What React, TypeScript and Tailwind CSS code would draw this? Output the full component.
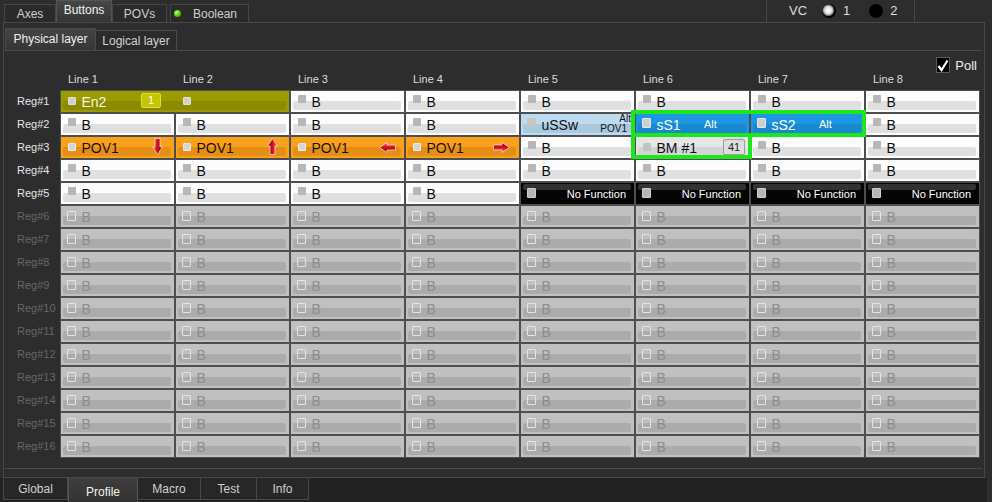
import React from "react";

type Variant = "normal" | "disabled" | "olive" | "orange" | "light" | "blue" | "gray" | "black";

const styles: Record<Variant, { bg: string; band: string; text: string; box: string }> = {
  normal: {
    bg: "bg-[#fcfcfc]",
    band: "bottom-[2px] h-[9px] bg-[#e0e0e0]",
    text: "text-[#0c0c0c]",
    box: "ml-[7px] mt-[4px] w-[8px] h-[8px] bg-[#b7b7b7]",
  },
  disabled: {
    bg: "bg-[#c0c0c0]",
    band: "bottom-[2px] h-[9px] bg-[#ababab]",
    text: "text-[#8d8d8d]",
    box: "ml-[6px] mt-[5px] w-[9px] h-[10px] border border-[#e4e4e4]",
  },
  olive: {
    bg: "bg-[#9b9b00]",
    band: "bottom-[2px] h-[9px] bg-[#8b8b00]",
    text: "text-[#f6f6e8]",
    box: "ml-[7px] mt-[6px] w-[8px] h-[8px] bg-[#d2d2c4] border border-[#e0e0d6]",
  },
  orange: {
    bg: "bg-[#f9a11a]",
    band: "bottom-[2px] h-[9px] bg-[#e48e18]",
    text: "text-[#1c1200]",
    box: "ml-[7px] mt-[6px] w-[8px] h-[8px] bg-[#d6d6d6] border border-[#ececec]",
  },
  light: {
    bg: "bg-[#bedcf0]",
    band: "bottom-[2px] h-[9px] bg-[#a8c9de]",
    text: "text-[#111]",
    box: "ml-[6px] mt-[4px] w-[9px] h-[9px] bg-[#c6c6c6]",
  },
  blue: {
    bg: "bg-[#1d97e2]",
    band: "bottom-[2px] h-[9px] bg-[#1988d0]",
    text: "text-white",
    box: "ml-[6px] mt-[4px] w-[9px] h-[10px] bg-[#cfcfcf] border border-[#e6e6e6]",
  },
  gray: {
    bg: "bg-[#e6e6e6]",
    band: "bottom-[2px] h-[9px] bg-[#d4d4d4]",
    text: "text-[#111]",
    box: "ml-[7px] mt-[6px] w-[8px] h-[8px] bg-[#c2c2c2]",
  },
  black: {
    bg: "bg-[#050505]",
    band: "top-[1px] h-[6px] bg-[#323232]",
    text: "text-white",
    box: "ml-[6px] mt-[5px] w-[9px] h-[10px] bg-[#b6b6b6] border border-[#cfcfcf]",
  },
};

function ArrowV({ up }: { up?: boolean }) {
  return (
    <svg width="11" height="17" viewBox="0 0 11 17" className={up ? "rotate-180" : ""}>
      <defs>
        <linearGradient id={up ? "gu" : "gd"} x1="0" y1="0" x2="1" y2="0">
          <stop offset="0" stopColor="#ff7a7a" />
          <stop offset="0.45" stopColor="#d8141e" />
          <stop offset="1" stopColor="#8a0010" />
        </linearGradient>
      </defs>
      <polygon
        points="3,0.5 8,0.5 8,9 10.5,9 5.5,16.5 0.5,9 3,9"
        fill={`url(#${up ? "gu" : "gd"})`}
        stroke="#f6d2d2"
        strokeWidth="0.8"
      />
    </svg>
  );
}

function ArrowH({ right }: { right?: boolean }) {
  return (
    <svg width="17" height="11" viewBox="0 0 17 11" className={right ? "rotate-180" : ""}>
      <defs>
        <linearGradient id={right ? "gr" : "gl"} x1="0" y1="0" x2="0" y2="1">
          <stop offset="0" stopColor="#ff7a7a" />
          <stop offset="0.45" stopColor="#d8141e" />
          <stop offset="1" stopColor="#8a0010" />
        </linearGradient>
      </defs>
      <polygon
        points="16.5,3 8,3 8,0.5 0.5,5.5 8,10.5 8,8 16.5,8"
        fill={`url(#${right ? "gr" : "gl"})`}
        stroke="#f6d2d2"
        strokeWidth="0.8"
      />
    </svg>
  );
}

function Cell({
  v,
  label = "B",
  span,
  children,
}: {
  v: Variant;
  label?: string;
  span?: boolean;
  children?: React.ReactNode;
}) {
  const s = styles[v];
  return (
    <div className={`relative h-[21px] overflow-hidden ${s.bg} ${span ? "col-span-2" : ""}`}>
      <span className={`absolute left-[2px] right-[3px] rounded-[2px] ${s.band}`} />
      <div className="relative flex h-full items-center">
        <span className={`shrink-0 self-start rounded-[1px] ${s.box}`} />
        {label && <span className={`ml-[5.5px] text-[14px] leading-none ${s.text}`}>{label}</span>}
        {children}
      </div>
    </div>
  );
}

const B = () => <Cell v="normal" />;
const D = () => <Cell v="disabled" />;

function NoFunction() {
  return (
    <Cell v="black" label="">
      <span className="ml-auto mr-[8px] mt-[2px] text-[11px] leading-none text-white">No Function</span>
    </Cell>
  );
}

function Pov({ dir }: { dir: "down" | "up" | "left" | "right" }) {
  return (
    <Cell v="orange" label="POV1">
      {dir === "down" && (
        <span className="absolute right-[11px] top-[1px] flex">
          <ArrowV />
        </span>
      )}
      {dir === "up" && (
        <span className="absolute right-[11px] top-[1px] flex">
          <ArrowV up />
        </span>
      )}
      {dir === "left" && (
        <span className="absolute right-[8px] top-[5px] flex">
          <ArrowH />
        </span>
      )}
      {dir === "right" && (
        <span className="absolute right-[9px] top-[5px] flex">
          <ArrowH right />
        </span>
      )}
    </Cell>
  );
}

function Grid() {
  const cells: React.ReactNode[] = [];
  // Reg#1
  cells.push(
    <Cell key="r1" v="olive" label="En2" span>
      <span className="absolute left-[80px] top-[2px] flex h-[15px] w-[20px] items-center justify-center rounded-[2px] border border-[#dede3c] bg-[#c6c600] text-[11px] leading-none text-white">
        1
      </span>
      <span className="absolute left-[122px] top-[6px] h-[8px] w-[8px] rounded-[1px] border border-[#e0e0d6] bg-[#d2d2c4]" />
    </Cell>
  );
  for (let i = 0; i < 6; i++) cells.push(<B key={`r1-${i}`} />);
  // Reg#2
  for (let i = 0; i < 4; i++) cells.push(<B key={`r2-${i}`} />);
  cells.push(
    <Cell key="r2-u" v="light" label="uSSw">
      <span className="absolute right-[3px] top-0 text-[10px] leading-[9px] text-[#111]">Alt</span>
      <span className="absolute right-[7px] top-[10px] text-[10px] leading-[9px] text-[#111]">POV1</span>
    </Cell>
  );
  cells.push(
    <Cell key="r2-s1" v="blue" label="sS1">
      <span className="absolute left-[68px] top-[5px] text-[11px] leading-none text-white">Alt</span>
    </Cell>
  );
  cells.push(
    <Cell key="r2-s2" v="blue" label="sS2">
      <span className="absolute left-[68px] top-[5px] text-[11px] leading-none text-white">Alt</span>
    </Cell>
  );
  cells.push(<B key="r2-8" />);
  // Reg#3
  cells.push(<Pov key="p1" dir="down" />);
  cells.push(<Pov key="p2" dir="up" />);
  cells.push(<Pov key="p3" dir="left" />);
  cells.push(<Pov key="p4" dir="right" />);
  cells.push(<B key="r3-5" />);
  cells.push(
    <Cell key="r3-bm" v="gray" label="BM #1">
      <span className="absolute right-[4px] top-[2px] flex h-[16px] w-[22px] items-center justify-center rounded-[2px] border border-[#9c9c9c] bg-[#dedede] text-[11px] leading-none text-[#222]">
        41
      </span>
    </Cell>
  );
  cells.push(<B key="r3-7" />);
  cells.push(<B key="r3-8" />);
  // Reg#4
  for (let i = 0; i < 8; i++) cells.push(<B key={`r4-${i}`} />);
  // Reg#5
  for (let i = 0; i < 4; i++) cells.push(<B key={`r5-${i}`} />);
  for (let i = 0; i < 4; i++) cells.push(<NoFunction key={`r5n-${i}`} />);
  // Reg#6..16
  for (let i = 0; i < 11 * 8; i++) cells.push(<D key={`d-${i}`} />);

  return (
    <div className="relative grid grid-cols-[repeat(8,113px)] gap-[2px] bg-[#4e4e4e] p-[1px]">
      {cells}
      <span className="pointer-events-none absolute left-[571px] top-[20px] h-[27px] w-[235px] border-[4px] border-[#1ee61e]" />
      <span className="pointer-events-none absolute left-[571px] top-[43px] h-[26px] w-[121px] border-[4px] border-[#1ee61e]" />
    </div>
  );
}

export default function App() {
  const regs = Array.from({ length: 16 }, (_, i) => i + 1);
  return (
    <div className="flex h-[502px] w-[992px] flex-col overflow-hidden bg-[#2d2d2d] font-['Liberation_Sans',Arial,sans-serif] text-[12px] select-none">
      {/* top tabs */}
      <div className="flex h-[22px] shrink-0 items-end">
        <div className="ml-[4px] flex items-end">
          <div className="flex h-[18px] w-[52px] items-center justify-center border border-b-0 border-[#464646] bg-[#2a2a2a] text-[#cfcfcf]">
            Axes
          </div>
          <div className="flex h-[22px] w-[56px] items-center justify-center border border-b-0 border-[#555] bg-[linear-gradient(#474747,#363636)] pb-[3px] text-[#f2f2f2]">
            Buttons
          </div>
          <div className="flex h-[18px] w-[55px] items-center justify-center border border-b-0 border-[#464646] bg-[#2a2a2a] text-[#cfcfcf]">
            POVs
          </div>
          <div className="ml-[3px] flex h-[18px] w-[79px] items-center border border-b-0 border-[#464646] bg-[#2a2a2a] text-[#cfcfcf]">
            <span className="ml-[3px] h-[7px] w-[7px] rounded-full bg-[radial-gradient(circle_at_35%_35%,#b6ff6a_0,#5cc400_55%,#2f7a00_100%)]" />
            <span className="ml-[12px]">Boolean</span>
          </div>
        </div>
        <div className="flex-1" />
        <div className="mr-[77px] flex h-[22px] w-[149px] items-center border-x border-[#464646] text-[13px] text-[#dedede]">
          <span className="ml-[22px]">VC</span>
          <span className="ml-[15px] flex h-[14px] w-[14px] rounded-full bg-[radial-gradient(circle_at_45%_45%,#ffffff_0,#e4e4e4_30%,#9a9a9a_45%,#000_58%)]" />
          <span className="ml-[7px]">1</span>
          <span className="ml-[19px] h-[14px] w-[14px] rounded-full bg-black" />
          <span className="ml-[7px]">2</span>
        </div>
      </div>

      {/* main panel */}
      <div className="ml-[3px] flex h-[456px] w-[982px] shrink-0 flex-col border border-[#474747]">
        <div className="ml-[1px] flex h-[27px] items-end">
          <div className="flex h-[22px] w-[91px] items-center justify-center border border-b-0 border-[#4c4c4c] bg-[linear-gradient(#444,#363636)] pb-[2px] text-[#f0f0f0]">
            Physical layer
          </div>
          <div className="flex h-[20px] w-[81px] items-center justify-center border border-b-0 border-l-0 border-[#4c4c4c] bg-[#2b2b2b] text-[#d2d2d2]">
            Logical layer
          </div>
        </div>
        <div className="ml-[1px] flex h-[419px] w-[977px] flex-col border-y border-[#4a4a4a]">
          <div className="mt-[6px] flex h-[16px] items-center justify-end pr-[5px]">
            <span className="flex h-[16px] w-[14px] items-center justify-center border border-[#5a5a5a] bg-black">
              <svg width="12" height="13" viewBox="0 0 12 13">
                <path d="M1.5 7 L4.5 11 L10.5 1.5" fill="none" stroke="#fff" strokeWidth="2.2" />
              </svg>
            </span>
            <span className="ml-[5px] text-[13px] leading-none text-[#f0f0f0]">Poll</span>
          </div>
          <div className="flex h-[17px] pl-[56px] text-[11px] leading-[13px] text-[#dcdcdc]">
            {Array.from({ length: 8 }, (_, i) => (
              <div key={i} className="w-[115px] pl-[7px]">
                Line {i + 1}
              </div>
            ))}
          </div>
          <div className="flex">
            <div className="flex w-[55px] flex-col gap-[2px] pt-[1px]">
              {regs.map((r) => (
                <div
                  key={r}
                  className={`h-[21px] whitespace-nowrap pl-[12px] text-[11px] leading-[21px] ${
                    r <= 5 ? "text-[#e6e6e6]" : "text-[#676767]"
                  }`}
                >
                  Reg#{r}
                </div>
              ))}
            </div>
            <Grid />
          </div>
        </div>
      </div>

      {/* bottom tabs */}
      <div className="flex h-[24px] w-[987px] shrink-0 items-start bg-[#222] pl-[3px] text-[#cfcfcf]">
        <div className="flex h-[22px] w-[65px] justify-center border border-t-0 border-[#474747] bg-[#272727] pt-[5px] leading-none">
          Global
        </div>
        <div className="flex h-[24px] w-[70px] justify-center border-x border-[#555] bg-[linear-gradient(#3e3e3e,#333)] pt-[8px] leading-none text-[#f2f2f2]">
          Profile
        </div>
        <div className="flex h-[22px] w-[63px] justify-center border border-t-0 border-l-0 border-[#474747] bg-[#272727] pt-[5px] leading-none">
          Macro
        </div>
        <div className="flex h-[22px] w-[56px] justify-center border border-t-0 border-l-0 border-[#474747] bg-[#272727] pt-[5px] leading-none">
          Test
        </div>
        <div className="flex h-[22px] w-[52px] justify-center border border-t-0 border-l-0 border-[#474747] bg-[#272727] pt-[5px] leading-none">
          Info
        </div>
      </div>
    </div>
  );
}
